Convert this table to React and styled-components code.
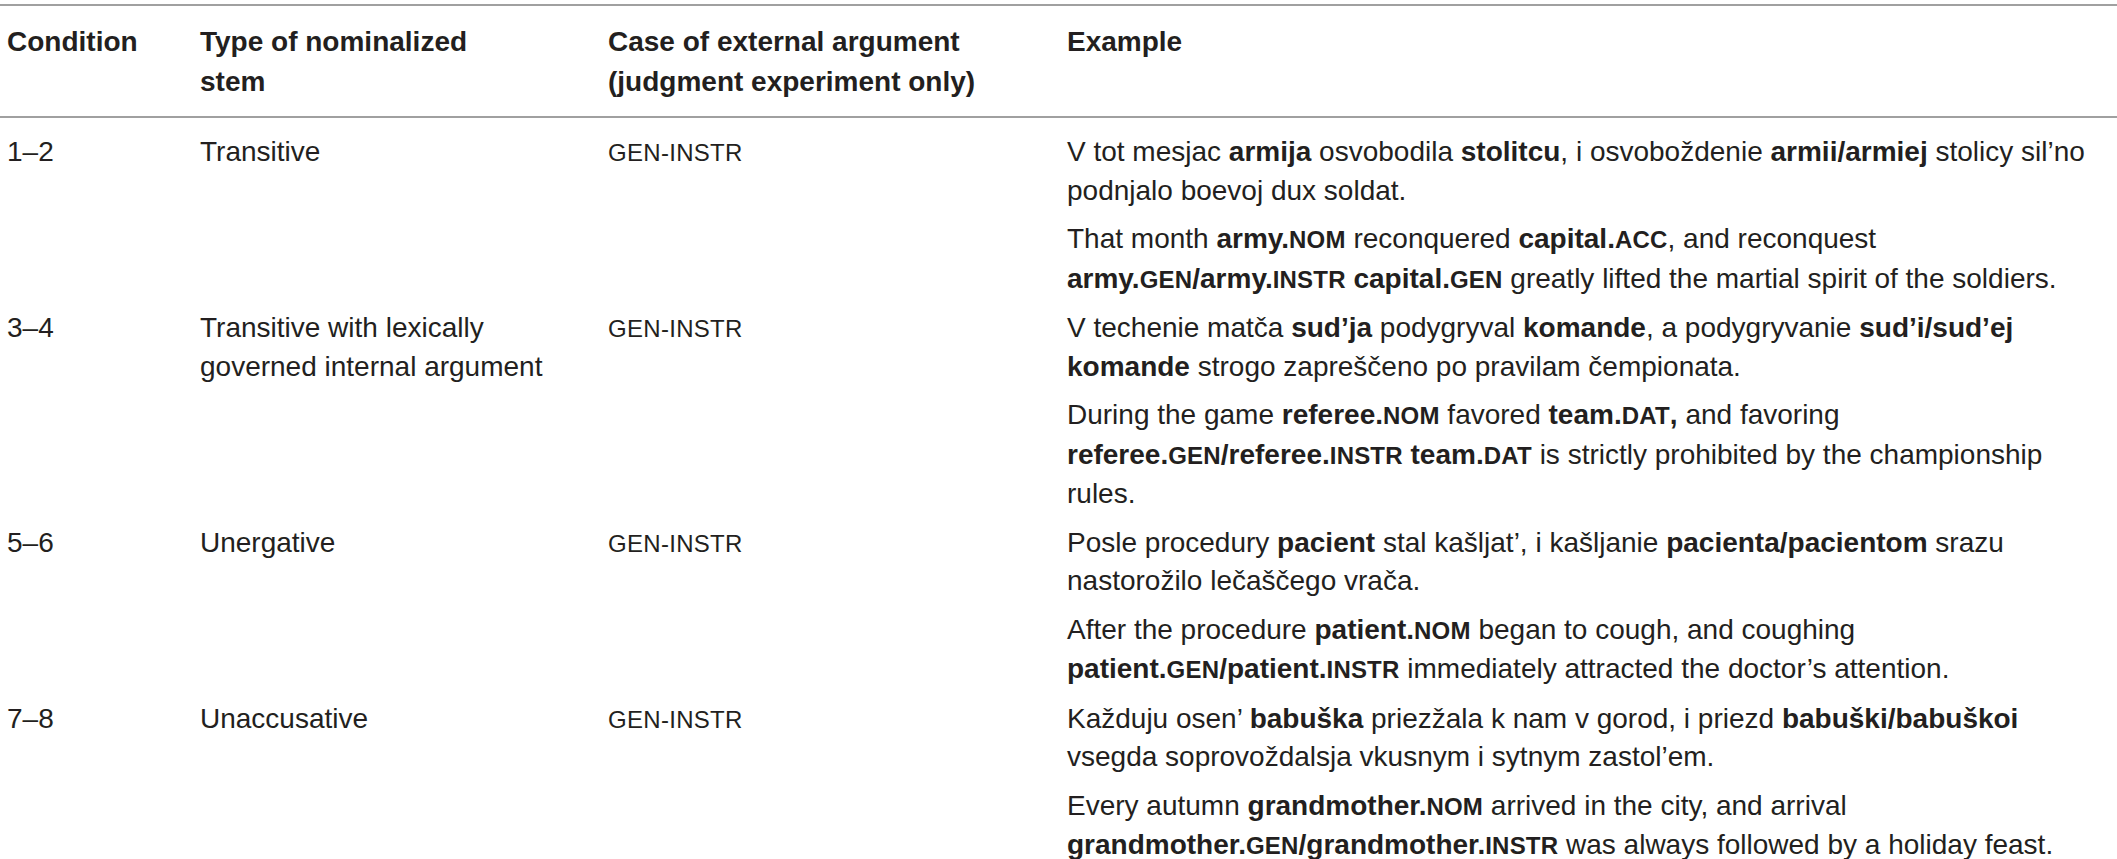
import React from "react";
import styled, { createGlobalStyle } from "styled-components";

const Global = createGlobalStyle`
  html, body { margin: 0; padding: 0; background: #ffffff; }
  body {
    font-family: "Liberation Sans", Arial, Helvetica, sans-serif;
    color: #231f20;
  }
`;

const Table = styled.table`
  width: 2117px;
  margin-top: 4px;
  border-collapse: collapse;
  table-layout: fixed;
  font-size: 28px;
`;

const HeadRow = styled.tr`
  border-top: 2px solid #a0a0a0;
  border-bottom: 2px solid #a0a0a0;
`;

const Th = styled.th`
  box-sizing: border-box;
  text-align: left;
  vertical-align: top;
  font-weight: 700;
  line-height: 40px;
  padding: 16px 0 14px 7px;
  width: ${(p) => p.$w};
  color: #231f20;
`;

const Td = styled.td`
  vertical-align: top;
  line-height: 38.5px;
  padding: ${(p) => (p.$first ? "15px" : "10px")} 0 0 7px;
  font-weight: 400;
`;

const CaseText = styled.span`
  font-size: 24px;
  letter-spacing: 0.3px;
  text-transform: uppercase;
`;

const Para = styled.p`
  margin: 0;
  & + & { margin-top: 10px; }
`;

const B = styled.b`
  font-weight: 700;
`;

const SC = styled.span`
  font-size: 24px;
  letter-spacing: 0.2px;
  text-transform: uppercase;
`;

const rows = [
  {
    cond: "1–2",
    type: <>Transitive</>,
    ex: [
      <>
        V tot mesjac <B>armija</B> osvobodila <B>stolitcu</B>, i osvoboždenie{" "}
        <B>armii/armiej</B> stolicy sil’no
        <br />
        podnjalo boevoj dux soldat.
      </>,
      <>
        That month <B>army.<SC>nom</SC></B> reconquered <B>capital.<SC>acc</SC></B>, and reconquest
        <br />
        <B>army.<SC>gen</SC>/army.<SC>instr</SC> capital.<SC>gen</SC></B> greatly lifted the martial
        spirit of the soldiers.
      </>,
    ],
  },
  {
    cond: "3–4",
    type: (
      <>
        Transitive with lexically
        <br />
        governed internal argument
      </>
    ),
    ex: [
      <>
        V techenie matča <B>sud’ja</B> podygryval <B>komande</B>, a podygryvanie{" "}
        <B>sud’i/sud’ej</B>
        <br />
        <B>komande</B> strogo zapreščeno po pravilam čempionata.
      </>,
      <>
        During the game <B>referee.<SC>nom</SC></B> favored <B>team.<SC>dat</SC>,</B> and favoring
        <br />
        <B>referee.<SC>gen</SC>/referee.<SC>instr</SC> team.<SC>dat</SC></B> is strictly prohibited by
        the championship
        <br />
        rules.
      </>,
    ],
  },
  {
    cond: "5–6",
    type: <>Unergative</>,
    ex: [
      <>
        Posle procedury <B>pacient</B> stal kašljat’, i kašljanie <B>pacienta/pacientom</B> srazu
        <br />
        nastorožilo lečaščego vrača.
      </>,
      <>
        After the procedure <B>patient.<SC>nom</SC></B> began to cough, and coughing
        <br />
        <B>patient.<SC>gen</SC>/patient.<SC>instr</SC></B> immediately attracted the doctor’s
        attention.
      </>,
    ],
  },
  {
    cond: "7–8",
    type: <>Unaccusative</>,
    ex: [
      <>
        Každuju osen’ <B>babuška</B> priezžala k nam v gorod, i priezd <B>babuški/babuškoi</B>
        <br />
        vsegda soprovoždalsja vkusnym i sytnym zastol’em.
      </>,
      <>
        Every autumn <B>grandmother.<SC>nom</SC></B> arrived in the city, and arrival
        <br />
        <B>grandmother.<SC>gen</SC>/grandmother.<SC>instr</SC></B> was always followed by a holiday
        feast.
      </>,
    ],
  },
];

export default function App() {
  return (
    <>
      <Global />
      <Table>
        <colgroup>
          <col style={{ width: "193px" }} />
          <col style={{ width: "408px" }} />
          <col style={{ width: "459px" }} />
          <col />
        </colgroup>
        <thead>
          <HeadRow>
            <Th>Condition</Th>
            <Th>
              Type of nominalized
              <br />
              stem
            </Th>
            <Th>
              Case of external argument
              <br />
              (judgment experiment only)
            </Th>
            <Th>Example</Th>
          </HeadRow>
        </thead>
        <tbody>
          {rows.map((r, i) => (
            <tr key={r.cond}>
              <Td $first={i === 0}>{r.cond}</Td>
              <Td $first={i === 0}>{r.type}</Td>
              <Td $first={i === 0}>
                <CaseText>gen-instr</CaseText>
              </Td>
              <Td $first={i === 0}>
                {r.ex.map((e, j) => (
                  <Para key={j}>{e}</Para>
                ))}
              </Td>
            </tr>
          ))}
        </tbody>
      </Table>
    </>
  );
}
